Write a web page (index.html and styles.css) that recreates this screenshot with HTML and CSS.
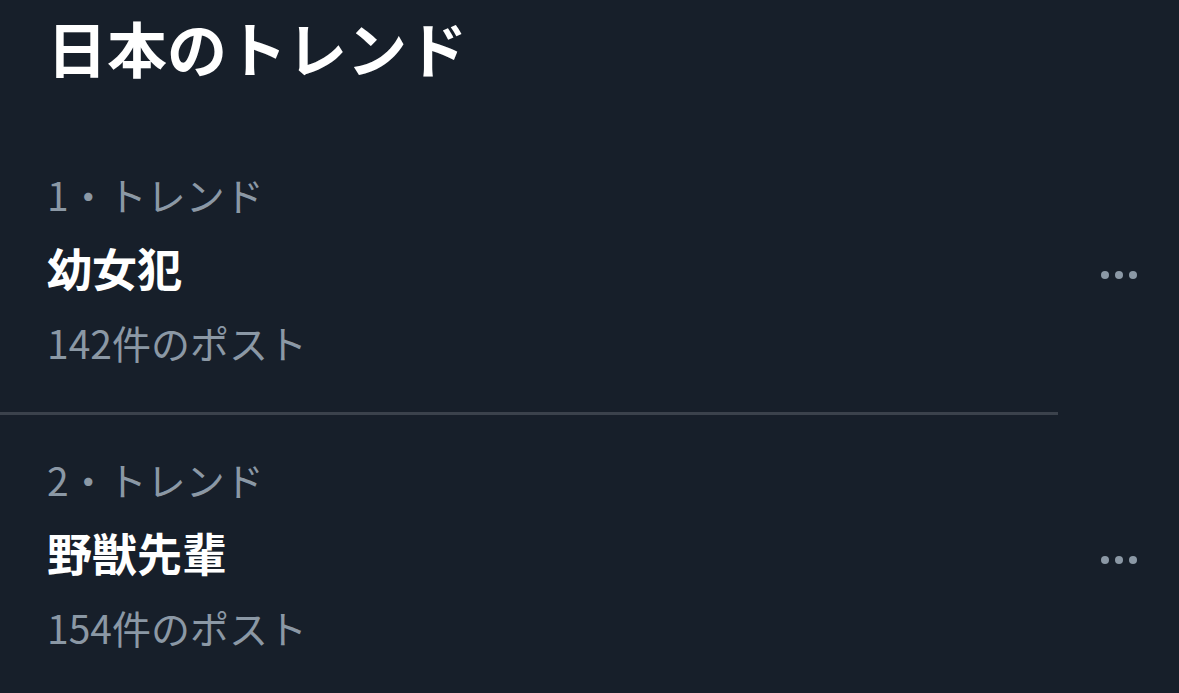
FILE: index.html
```html
<!DOCTYPE html>
<html lang="ja">
<head>
<meta charset="utf-8">
<link rel="stylesheet" href="styles.css">
</head>
<body>
<main class="panel">
  <h1 class="title">日本のトレンド</h1>
  <section class="trend">
    <div class="info">
      <div class="meta">1・トレンド</div>
      <div class="name">幼女犯</div>
      <div class="count">142件のポスト</div>
    </div>
    <div class="more"><span></span><span></span><span></span></div>
  </section>
  <div class="divider"></div>
  <section class="trend">
    <div class="info">
      <div class="meta">2・トレンド</div>
      <div class="name">野獣先輩</div>
      <div class="count">154件のポスト</div>
    </div>
    <div class="more"><span></span><span></span><span></span></div>
  </section>
</main>
</body>
</html>
```
FILE: styles.css
```css
html, body {
  margin: 0;
  padding: 0;
  background: #171f2a;
}
body {
  width: 1179px;
  height: 693px;
  overflow: hidden;
  font-family: "Noto Sans CJK JP", "Noto Sans", sans-serif;
}
.panel {
  display: flex;
  flex-direction: column;
}
.title {
  margin: 0 0 34px 0;
  height: 96px;
  line-height: 94px;
  padding-left: 47px;
  font-size: 60px;
  font-weight: 700;
  color: #ffffff;
}
.trend {
  display: flex;
  align-items: center;
  justify-content: space-between;
  padding: 27px 42px 33px 47px;
}
.info {
  display: flex;
  flex-direction: column;
}
.meta, .count {
  height: 74px;
  line-height: 74px;
  font-size: 39px;
  color: #8b98a5;
}
.name {
  height: 74px;
  line-height: 74px;
  font-size: 45px;
  font-weight: 700;
  color: #ffffff;
}
.more {
  display: flex;
  gap: 6px;
  margin-top: 14px;
}
.more span {
  width: 8px;
  height: 8px;
  border-radius: 50%;
  background: #8b98a5;
}
.divider {
  width: 1058px;
  height: 3px;
  background: #3b424c;
}
```
